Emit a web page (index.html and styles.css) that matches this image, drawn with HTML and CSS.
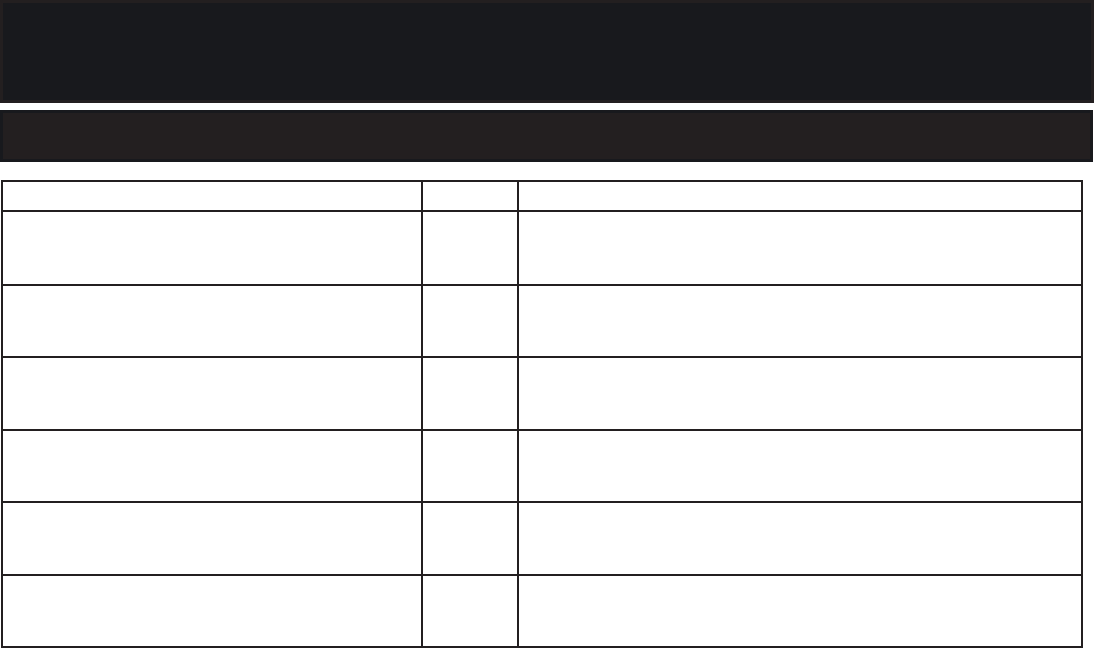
FILE: index.html
```html
<!DOCTYPE html>
<html lang="en">
<head>
<meta charset="utf-8">
<title>Table</title>
<link rel="stylesheet" href="styles.css">
</head>
<body>
<header class="banner"></header>
<div class="subbar"></div>
<table class="grid">
  <thead>
    <tr class="head-row"><th class="c1"></th><th class="c2"></th><th class="c3"></th></tr>
  </thead>
  <tbody>
    <tr class="row r-a"><td></td><td></td><td></td></tr>
    <tr class="row r-b"><td></td><td></td><td></td></tr>
    <tr class="row r-c"><td></td><td></td><td></td></tr>
    <tr class="row r-b"><td></td><td></td><td></td></tr>
    <tr class="row r-c"><td></td><td></td><td></td></tr>
    <tr class="row r-b"><td></td><td></td><td></td></tr>
  </tbody>
</table>
</body>
</html>
```
FILE: styles.css
```css
html, body {
  margin: 0;
  padding: 0;
  background: #ffffff;
  font-family: "Liberation Sans", Arial, sans-serif;
  overflow: hidden;
}
.banner {
  display: block;
  width: 1094px;
  height: 103px;
  box-sizing: border-box;
  border: 3px solid #231f20;
  background: #18191d;
}
.subbar {
  width: 1093px;
  height: 52px;
  margin-top: 7px;
  box-sizing: border-box;
  border: 3px solid #18191d;
  background: #231f20;
}
.grid {
  margin: 18px 0 0 1px;
  border-collapse: separate;
  border-spacing: 0;
  border-top: 2px solid #231f20;
  border-left: 2px solid #231f20;
  table-layout: fixed;
  width: 1082px;
}
.grid th, .grid td {
  padding: 0;
  border-right: 2px solid #231f20;
  border-bottom: 2px solid #231f20;
}
.grid .c1 { width: 418px; }
.grid .c2 { width: 94px; }
.grid .c3 { width: 562px; }
.head-row th { height: 28px; }
.r-a td { height: 72px; }
.r-b td { height: 70px; }
.r-c td { height: 71px; }
```
